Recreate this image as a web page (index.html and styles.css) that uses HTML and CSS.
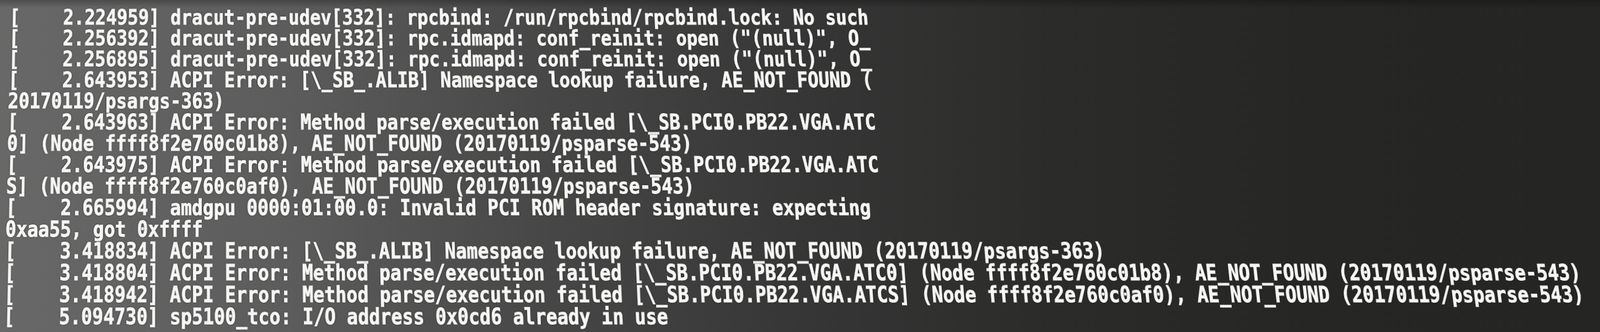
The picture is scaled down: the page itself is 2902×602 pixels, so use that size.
FILE: index.html
```html
<!DOCTYPE html>
<html lang="en">
  <head>
    <meta charset="UTF-8" />
    <meta name="viewport" content="width=device-width, initial-scale=1.0" />
    <title>Boot log</title>
    <link rel="stylesheet" href="styles.css">
  </head>
  <body>
    <div class="screen">
      <pre class="log">[    2.224959] dracut-pre-udev[332]: rpcbind: /run/rpcbind/rpcbind.lock: No such
[    2.256392] dracut-pre-udev[332]: rpc.idmapd: conf_reinit: open ("(null)", O_
[    2.256895] dracut-pre-udev[332]: rpc.idmapd: conf_reinit: open ("(null)", O_
[    2.643953] ACPI Error: [\_SB_.ALIB] Namespace lookup failure, AE_NOT_FOUND (
20170119/psargs-363)
[    2.643963] ACPI Error: Method parse/execution failed [\_SB.PCI0.PB22.VGA.ATC
0] (Node ffff8f2e760c01b8), AE_NOT_FOUND (20170119/psparse-543)
[    2.643975] ACPI Error: Method parse/execution failed [\_SB.PCI0.PB22.VGA.ATC
S] (Node ffff8f2e760c0af0), AE_NOT_FOUND (20170119/psparse-543)
[    2.665994] amdgpu 0000:01:00.0: Invalid PCI ROM header signature: expecting
0xaa55, got 0xffff
[    3.418834] ACPI Error: [\_SB_.ALIB] Namespace lookup failure, AE_NOT_FOUND (20170119/psargs-363)
[    3.418804] ACPI Error: Method parse/execution failed [\_SB.PCI0.PB22.VGA.ATC0] (Node ffff8f2e760c01b8), AE_NOT_FOUND (20170119/psparse-543)
[    3.418942] ACPI Error: Method parse/execution failed [\_SB.PCI0.PB22.VGA.ATCS] (Node ffff8f2e760c0af0), AE_NOT_FOUND (20170119/psparse-543)
[    5.094730] sp5100_tco: I/O address 0x0cd6 already in use</pre>
    </div>
  </body>
</html>
```

FILE: styles.css
```css
* {
  box-sizing: border-box;
  margin: 0;
  padding: 0;
}

html,
body {
  height: 100%;
}

body {
  overflow: hidden;
  background:
    linear-gradient(180deg, rgba(0, 0, 0, 0.25) 0, rgba(0, 0, 0, 0) 14px),
    linear-gradient(90deg, #686868 0%, #5c5c5c 18%, #474747 34%, #363636 50%, #2b2b2a 66%, #262624 82%, #252523 100%);
}

/* photo of a monitor: slight tilt, bottom rows are closer */
.screen {
  height: 602px;
  transform: perspective(2000px) rotateX(6.5deg);
  transform-origin: 352px 300px;
}

.log {
  padding: 6px 0 0 14px;
  font-family: "DejaVu Sans Mono", "Liberation Mono", monospace;
  font-weight: bold;
  font-size: 38.5px;
  line-height: 39px;
  white-space: pre;
  color: #f6f6f4;
  -webkit-text-stroke: 1px #f6f6f4;
  text-shadow: 0 0 2px rgba(20, 20, 20, 0.9), 0 0 4px rgba(0, 0, 0, 0.5);
  transform: scaleX(0.853);
  transform-origin: 0 0;
}
```
